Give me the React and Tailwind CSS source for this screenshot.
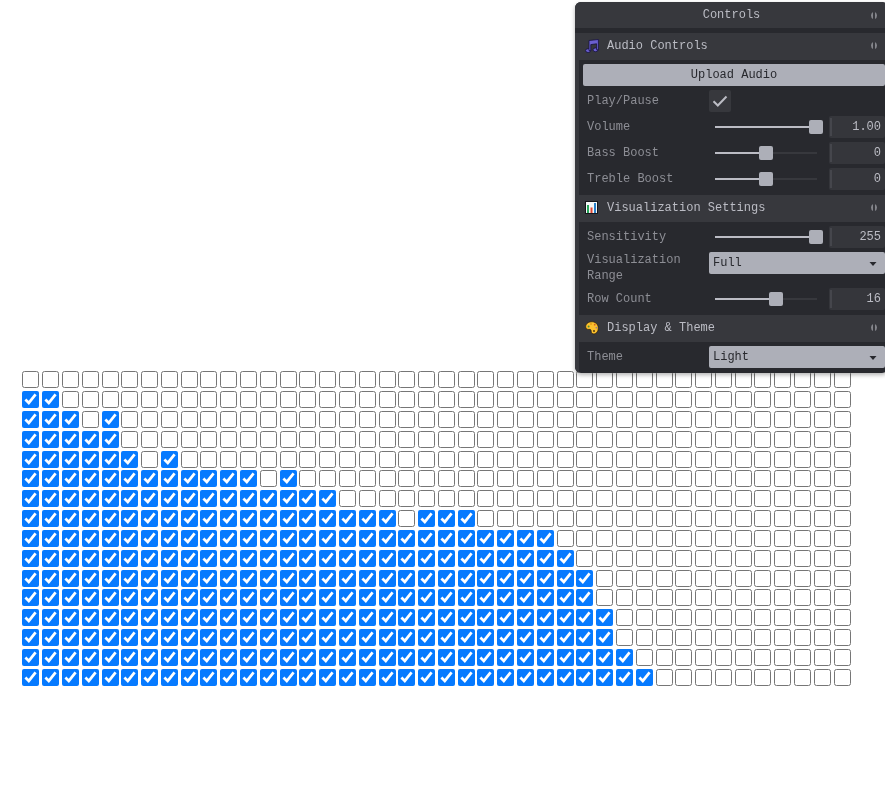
import { useState } from "react";

const COLUMNS = 42;

// Lit cells of each row: [first column, last column]
const ROWS = [
  [],
  [[0, 1]],
  [[0, 2], [4, 4]],
  [[0, 4]],
  [[0, 5], [7, 7]],
  [[0, 11], [13, 13]],
  [[0, 15]],
  [[0, 18], [20, 22]],
  [[0, 26]],
  [[0, 27]],
  [[0, 28]],
  [[0, 28]],
  [[0, 29]],
  [[0, 29]],
  [[0, 30]],
  [[0, 31]],
];

const isLit = (ranges, col) => ranges.some(([a, b]) => col >= a && col <= b);

function Visualizer() {
  return (
    <div className="grid h-[317px] grid-cols-[repeat(42,minmax(0,1fr))] grid-rows-[repeat(16,minmax(0,1fr))] place-items-center">
      {ROWS.map((ranges, r) =>
        Array.from({ length: COLUMNS }, (_, c) => (
          <input
            key={`${r}-${c}`}
            type="checkbox"
            aria-label={`Row ${r + 1}, column ${c + 1}`}
            defaultChecked={isLit(ranges, c)}
            className="m-0 size-[17px] accent-[#067aff]"
          />
        ))
      )}
    </div>
  );
}

function FoldMark() {
  return (
    <svg viewBox="0 0 6 7" className="h-[7px] w-[6px] shrink-0" fill="#85868c" aria-hidden="true">
      <path d="M2 0v7Q0 6 0 3.500T2 0zM4 0v7Q6 6 6 3.500T4 0z" />
    </svg>
  );
}

function MusicIcon() {
  return (
    <svg viewBox="0 0 14 14" className="size-[14px]" aria-hidden="true">
      <g fill="#6a5fd0" stroke="#17123f" strokeWidth="0.8">
        <ellipse cx="3.100" cy="11.600" rx="2.500" ry="1.900" />
        <ellipse cx="10.500" cy="10.800" rx="2.500" ry="1.900" />
        <path d="M4 1.500 13.400.5v10.300h-1.800V4.800L5.800 5.600v6H4z" />
      </g>
    </svg>
  );
}

function ChartIcon() {
  return (
    <svg viewBox="0 0 14 14" className="size-[14px]" aria-hidden="true">
      <rect x="0.5" y="0.5" width="12" height="12" fill="#f5f8f8" stroke="#15161a" />
      <rect x="2" y="4" width="2" height="8" fill="#27a65a" />
      <rect x="5.500" y="6.500" width="2" height="5.500" fill="#dd4632" />
      <rect x="9" y="2" width="2" height="10" fill="#277fc8" />
    </svg>
  );
}

function PaletteIcon() {
  return (
    <svg viewBox="0 0 14 14" className="size-[14px]" aria-hidden="true">
      <path
        d="M6 .8C2.400 1.200.4 3.800.7 6.200c.3 2 2 2.400 3.500 2.200 1.400-.2 2 .6 2 1.900 0 1.800 1.300 2.900 3 2.600 2.500-.4 4.200-2.900 4.100-5.900C13.200 3 10 .4 6 .8z"
        fill="#fbc02d"
        stroke="#2b1c08"
        strokeWidth="0.7"
      />
      <circle cx="3.600" cy="5.400" r="1" fill="#4b8a3b" />
      <circle cx="6" cy="3" r="0.9" fill="#e39a16" />
      <circle cx="9.700" cy="3.700" r="0.9" fill="#d75d24" />
      <circle cx="11.300" cy="6.800" r="0.8" fill="#8b6bb0" />
      <ellipse cx="9" cy="10" rx="0.9" ry="1.100" fill="#3a2a12" />
    </svg>
  );
}

function Folder({ icon, title, children }) {
  return (
    <section className="border-l-4 border-[#37383d]">
      <button type="button" className="flex h-[27px] w-full items-center bg-[#37383d] pr-[11px] pb-[2px] pl-[6px] text-left text-[#bbbcc4]">
        {icon}
        <span className="ml-2 flex-1">{title}</span>
        <FoldMark />
      </button>
      <div className="flex flex-col gap-1 pt-1 pr-[3px] pb-[5px] pl-1">{children}</div>
    </section>
  );
}

function Row({ id, label, children }) {
  return (
    <div className="flex min-h-[22px] items-start">
      <label htmlFor={id} className="w-[126px] shrink-0 self-center pr-4 pl-1 leading-4 text-[#8d8e95]">
        {label}
      </label>
      <div className="flex min-w-0 flex-1">{children}</div>
    </div>
  );
}

function SliderRow({ id, label, min, max, step, initial, digits = 0 }) {
  const [value, setValue] = useState(initial);
  const ratio = (value - min) / (max - min);
  return (
    <Row id={id} label={label}>
      <input
        id={id}
        type="range"
        min={min}
        max={max}
        step={step}
        value={value}
        onChange={(e) => setValue(Number(e.target.value))}
        style={{ "--fill": `${6 + ratio * 102}px` }}
        className="m-0 h-[22px] w-[114px] shrink-0 appearance-none bg-transparent [&::-webkit-slider-runnable-track]:h-[2px] [&::-webkit-slider-runnable-track]:bg-[linear-gradient(to_right,transparent_6px,#bbbcc4_6px,#bbbcc4_var(--fill),#37383d_var(--fill),#37383d_108px,transparent_108px)] [&::-webkit-slider-thumb]:-mt-[6px] [&::-webkit-slider-thumb]:size-[14px] [&::-webkit-slider-thumb]:appearance-none [&::-webkit-slider-thumb]:rounded-[2px] [&::-webkit-slider-thumb]:bg-[#adafb8]"
      />
      <div className="ml-[6px] flex h-[22px] min-w-0 flex-1 rounded-[2px] bg-[#35363b] py-[2px] pl-px">
        <span className="w-[2px] shrink-0 bg-[#45464c]" />
        <input
          type="text"
          aria-label={`${label} value`}
          readOnly
          value={value.toFixed(digits)}
          className="w-full min-w-0 bg-transparent pr-1 text-right text-[#bbbcc4] outline-none"
        />
      </div>
    </Row>
  );
}

function SelectRow({ id, label, options }) {
  return (
    <Row id={id} label={label}>
      <div className="relative w-full">
        <select id={id} className="block h-[22px] w-full appearance-none rounded-[2px] bg-[#adafb8] pr-5 pb-px pl-1 text-[#28292e] outline-none">
          {options.map((o) => (
            <option key={o}>{o}</option>
          ))}
        </select>
        <svg viewBox="0 0 8 4" className="pointer-events-none absolute top-[10px] right-2 h-[4px] w-[8px]" aria-hidden="true">
          <path d="M0.500 0h7L4 4z" fill="#28292e" />
        </svg>
      </div>
    </Row>
  );
}

function ControlPanel() {
  return (
    <aside className="fixed top-[2px] -right-[3px] w-[313px] overflow-hidden rounded-[6px] bg-[#28292e] font-['Courier_New','Liberation_Mono',monospace] text-[12px] leading-4 shadow-[0_2px_4px_rgba(0,0,0,0.3)]">
      <button type="button" className="mb-[5px] flex h-[26px] w-full items-center bg-[#37383d] pr-[11px] pl-[17px] text-[#bbbcc4]">
        <span className="flex-1 text-center">Controls</span>
        <FoldMark />
      </button>

      <Folder icon={<MusicIcon />} title="Audio Controls">
        <button type="button" className="h-[22px] w-full rounded-[2px] bg-[#adafb8] text-[#28292e]">
          Upload Audio
        </button>
        <Row id="play" label="Play/Pause">
          <span className="grid size-[22px]">
            <input
              id="play"
              type="checkbox"
              defaultChecked
              className="peer col-start-1 row-start-1 m-0 size-[22px] appearance-none rounded-[2px] bg-[#37383d]"
            />
            <svg
              viewBox="0 0 22 22"
              className="pointer-events-none col-start-1 row-start-1 size-[22px] opacity-0 peer-checked:opacity-100"
              fill="none"
              stroke="#bbbcc4"
              strokeWidth="2"
              aria-hidden="true"
            >
              <path d="M4.500 11.200 8.800 15.500 17.500 6.500" />
            </svg>
          </span>
        </Row>
        <SliderRow id="volume" label="Volume" min={0} max={1} step={0.01} initial={1} digits={2} />
        <SliderRow id="bass" label="Bass Boost" min={-20} max={20} step={1} initial={0} />
        <SliderRow id="treble" label="Treble Boost" min={-20} max={20} step={1} initial={0} />
      </Folder>

      <Folder icon={<ChartIcon />} title="Visualization Settings">
        <SliderRow id="sensitivity" label="Sensitivity" min={0} max={255} step={1} initial={255} />
        <SelectRow id="range" label="Visualization Range" options={["Full", "Bass", "Mid", "Treble"]} />
        <SliderRow id="rows" label="Row Count" min={1} max={26} step={1} initial={16} />
      </Folder>

      <Folder icon={<PaletteIcon />} title="Display & Theme">
        <SelectRow id="theme" label="Theme" options={["Light", "Dark"]} />
      </Folder>
    </aside>
  );
}

export default function App() {
  return (
    <div className="min-h-screen bg-white">
      <main className="pt-[370px] pr-[33px] pl-[21px]">
        <Visualizer />
      </main>
      <ControlPanel />
    </div>
  );
}
